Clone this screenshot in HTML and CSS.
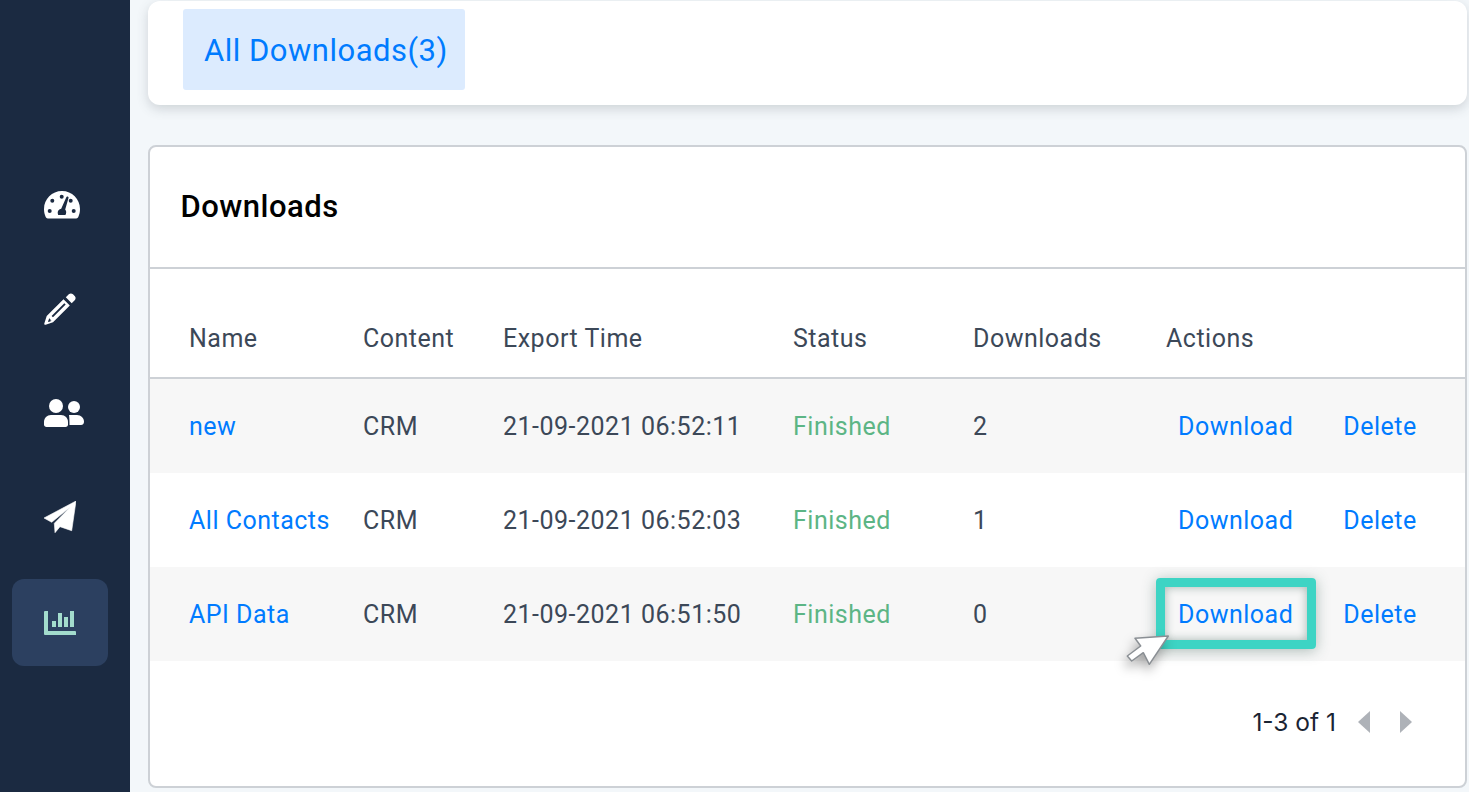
FILE: index.html
```html
<!DOCTYPE html>
<html lang="en">
<head>
<meta charset="utf-8">
<title>Downloads</title>
<link rel="stylesheet" href="styles.css">
</head>
<body>
<div class="app">
  <nav class="sidebar">
    <a class="nav-item"><svg width="36" height="28" viewBox="0 0 36 28"><path class="w" fill-rule="evenodd" d="M18 0C8 0 0 8 0 18c0 3 .6 5.500 1.700 8 .4.900 1.100 1.400 2 1.400h28.600c.900 0 1.600-.5 2-1.400 1.100-2.500 1.700-5 1.700-8C36 8 28 0 18 0zM17.700 3.700a2 2 0 1 1 0 4 2 2 0 0 1 0-4zM8.300 7.700a2 2 0 1 1 0 4 2 2 0 0 1 0-4zM5.700 18a2 2 0 1 1 0 4 2 2 0 0 1 0-4zM29.700 18a2 2 0 1 1 0 4 2 2 0 0 1 0-4zM26.700 7.700a2 2 0 1 1 0 4 2 2 0 0 1 0-4zM24.500 7l-3.300 11.500c.600.700 1 1.500 1 2.500 0 1.200-.3 2.200-.8 3h-7.200c-.3-.8-.5-1.600-.5-2.500 0-2 1.500-3.600 3.500-3.800L22.200 6.400c.4-1.500 2.800-.9 2.300.6z"/></svg></a>
    <a class="nav-item"><svg width="32" height="33" viewBox="0 0 32 33"><path class="w" fill-rule="evenodd" d="M24.800 1.300c1.200-1.200 3-1.200 4.200 0l1.700 1.700c1.200 1.200 1.200 3 0 4.200l-3 3-5.900-5.900zM19.500 6.200l6.300 6.300L9 29.300 1.700 31.800c-.8.300-1.700-.5-1.400-1.300L2.700 23zM20.300 10.200 7.600 22.900l1.400 1.400L21.700 11.600zM5.300 25.200l-1.300 3.200.7.700 3.200-1.300-1.300-.1-.1-1.200z"/></svg></a>
    <a class="nav-item"><svg width="40" height="28" viewBox="0 0 40 28"><g class="w"><circle cx="12" cy="7" r="7"/><circle cx="30" cy="8" r="6"/><path d="M0 23c0-4 3-7 7-7h10c4 0 7 3 7 7v2.500c0 1.500-1 2.500-2.500 2.500h-19C1 28 0 27 0 25.500z"/><path d="M25 16h8c4 0 7 3 7 6.500 0 2.300-1 3.500-3 3.500H25.500c0-4-.1-7.500-.5-10z"/></g></svg></a>
    <a class="nav-item"><svg width="32" height="32" viewBox="0 0 32 32"><path class="w" stroke="#fff" stroke-width=".6" stroke-linejoin="round" d="M32 0 27.700 29.700 16 25.700l-5 6-.7-9.400L26 6.300 7.700 21.300 0 17z"/></svg></a>
    <a class="nav-item active"><svg width="32" height="24" viewBox="0 0 32 24"><path class="g" d="M0 1a1 1 0 0 1 1-1h3v20h27a1 1 0 0 1 1 1v3H1a1 1 0 0 1-1-1zM8 10h4v6H8zM14 2h4v14h-4zM20 6h4v10h-4zM26 0h4v16h-4z"/></svg></a>
  </nav>
  <main class="main">
    <section class="tabs-card">
      <a class="tab">All Downloads(3)</a>
    </section>
    <section class="panel">
      <h2 class="panel-title">Downloads</h2>
      <div class="row head">
        <span>Name</span><span>Content</span><span>Export Time</span><span>Status</span><span>Downloads</span><span>Actions</span>
      </div>
      <div class="row odd">
        <a class="link">new</a><span>CRM</span><span>21-09-2021 06:52:11</span><span class="ok">Finished</span><span>2</span>
        <span class="actions"><a class="link">Download</a><a class="link">Delete</a></span>
      </div>
      <div class="row">
        <a class="link">All Contacts</a><span>CRM</span><span>21-09-2021 06:52:03</span><span class="ok">Finished</span><span>1</span>
        <span class="actions"><a class="link">Download</a><a class="link">Delete</a></span>
      </div>
      <div class="row odd">
        <a class="link">API Data</a><span>CRM</span><span>21-09-2021 06:51:50</span><span class="ok">Finished</span><span>0</span>
        <span class="actions"><a class="link callout">Download<svg class="cursor" width="52" height="36" viewBox="0 0 52 36"><path d="M48.300 5 15 7.300l5.700 7.700L7.300 25l4.400 5 11.600-8.300 6 11.600z" fill="#fff" stroke="#8a8f94" stroke-width="1.500" stroke-linejoin="round"/></svg></a><a class="link">Delete</a></span>
      </div>
      <div class="pager">
        <span>1-3 of 1</span>
        <svg width="12" height="22" viewBox="0 0 12 22"><path class="arrow" d="M12 0v22L0 11z"/></svg>
        <svg width="12" height="22" viewBox="0 0 12 22"><path class="arrow" d="M0 0v22l12-11z"/></svg>
      </div>
    </section>
  </main>
</div>
</body>
</html>
```
FILE: styles.css
```css
* { box-sizing: border-box; }
html, body { margin: 0; height: 100%; overflow: hidden; }
body { font-family: Roboto, "Liberation Sans", sans-serif; background: #f3f7fa; letter-spacing: .5px; }
.app { display: flex; height: 792px; }
.sidebar { width: 130px; flex: none; background: #1b2a41; padding: 157px 22px 0 12px; display: flex; flex-direction: column; gap: 8px; }
.nav-item { height: 96px; flex: none; border-radius: 12px; display: flex; align-items: center; padding-left: 32px; }
.nav-item.active { height: 87px; margin-top: 6px; background: #2c4060; }
.w { fill: #fff; }
.g { fill: #a3dccd; }
.main { flex: 1; padding: 1px 2px 0 18px; min-width: 0; }
.tabs-card { height: 104px; background: #fff; border-radius: 12px; padding: 8px 35px; box-shadow: 0 4px 12px rgba(60, 70, 80, .2); }
.tab { display: flex; align-items: center; width: 282px; height: 81px; padding: 2px 0 0 21px; border-radius: 3px; background: #dcebfe; color: #007bff; font-size: 31px; }
.panel { margin: 40px 0 0; height: 643px; background: #fff; border: 2px solid #cdd1d6; border-radius: 8px; }
.panel-title { margin: 0; height: 122px; padding: 0 0 2px 30.500px; display: flex; align-items: center; font-size: 31px; font-weight: 500; color: #000; border-bottom: 2px solid #cdd1d6; }
.row { display: grid; grid-template-columns: 174px 140px 290px 180px 193px 1fr; align-items: center; height: 94px; padding-left: 39px; font-size: 25px; color: #3c4858; }
.row.head { height: 110px; padding-top: 30px; border-bottom: 2px solid #cdd1d6; }
.row.odd { background: #f7f7f7; }
.link { color: #007bff; }
.ok { color: #5cb585; }
.actions { display: flex; padding-left: 12px; gap: 50px; }
.callout { position: relative; }
.callout::before { content: ""; position: absolute; left: -22px; right: -23px; top: -22px; bottom: -20px; border: 9px solid #3dd4c4; border-radius: 4px; box-shadow: 0 2px 14px rgba(40, 80, 70, .35), inset 0 0 10px rgba(40, 80, 70, .4); }
.cursor { position: absolute; left: -58px; top: 31px; filter: drop-shadow(-2px 6px 6px rgba(0, 0, 0, .35)); }
.pager { display: flex; align-items: center; justify-content: flex-end; height: 122px; padding-right: 53px; font-family: Inter, Roboto, sans-serif; font-size: 24.500px; letter-spacing: 0; color: #1a2433; }
.pager svg:first-of-type { margin-left: 22px; }
.pager svg:last-of-type { margin-left: 30px; }
.arrow { fill: #aeb2b8; }
```
